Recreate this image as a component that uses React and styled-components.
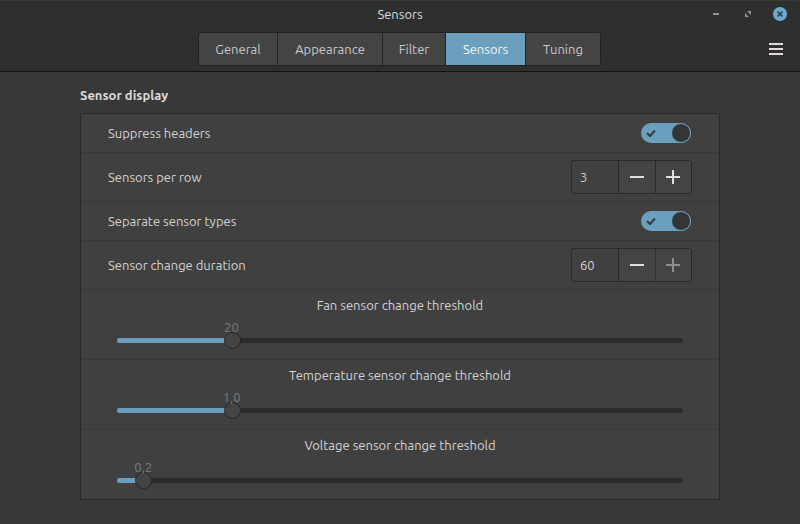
import React, { useState } from "react";
import styled, { createGlobalStyle, css } from "styled-components";

const blue = "#6a9fbe";
const line = "#292929";

const GlobalStyle = createGlobalStyle`
  *, *::before, *::after { box-sizing: border-box; }
  body {
    margin: 0;
    background: #383838;
    color: #d3d3d3;
    font: 13px/20px Ubuntu, "Noto Sans", sans-serif;
  }
  button, input { font: inherit; color: inherit; margin: 0; }
  button { cursor: pointer; }
`;

const Window = styled.div`
  display: flex;
  flex-direction: column;
  min-height: 100vh;
  border-bottom: 1px solid #3b3538;
`;

const Header = styled.header`
  background: #2f2f2f;
  border-top: 1px solid #393939;
  border-bottom: 1px solid #131313;
  border-radius: 0 3px 0 0;
  padding-bottom: 5px;
`;

const Bar = styled.div`
  display: grid;
  grid-template-columns: 1fr auto 1fr;
  align-items: center;
`;

const TitleBar = styled(Bar)`
  height: 26px;
  padding: 0 13px;
`;

const ToolBar = styled(Bar)`
  height: 34px;
  margin-top: 5px;
  padding: 0 17px 0 16px;
`;

const Title = styled.h1`
  grid-column: 2;
  margin: 0;
  font-size: 13px;
  font-weight: 400;
  line-height: 20px;
  color: #dcdcdc;
`;

const WindowButtons = styled.div`
  display: flex;
  justify-content: flex-end;
  gap: 18px;
`;

const IconButton = styled.button`
  display: flex;
  justify-self: end;
  padding: 0;
  border: 0;
  background: none;
`;

const Tabs = styled.nav`
  grid-column: 2;
  display: grid;
  grid-template-columns: 79px 105px 63px 80px 74px;
  height: 34px;
  border: 1px solid #222;
  border-radius: 3px;
  overflow: hidden;
`;

const Tab = styled.button`
  padding: 0;
  border: 0;
  border-right: 1px solid #222;
  background: ${(p) => (p.$active ? blue : "#444")};
  color: ${(p) => (p.$active ? "#f4f4f4" : "#c8c8c8")};
  &:last-child { border-right: 0; }
`;

const Content = styled.main`
  padding: 13px 80px 24px;
`;

const Heading = styled.h2`
  margin: 0 0 8px;
  font-size: 13px;
  font-weight: 700;
  line-height: 20px;
  color: #dadada;
`;

const Panel = styled.section`
  border: 1px solid ${line};
  background: #404040;
`;

const divider = css`
  border-bottom: 1px solid #393939;
  &:last-child { border-bottom: 0; }
`;

const Row = styled.div`
  display: flex;
  align-items: center;
  justify-content: space-between;
  min-height: ${(p) => (p.$tall ? 49 : 39)}px;
  padding: 0 27px;
  ${divider}
`;

const Switch = styled.label`
  position: relative;
  display: flex;
  align-items: center;
  justify-content: ${(p) => (p.$on ? "flex-end" : "flex-start")};
  width: 50px;
  height: 20px;
  margin-right: 1px;
  border-radius: 10px;
  background: ${(p) => (p.$on ? blue : "#2b2b2b")};
`;

const SwitchInput = styled.input`
  position: absolute;
  inset: 0;
  width: 100%;
  height: 100%;
  opacity: 0;
`;

const Check = styled.svg`
  position: absolute;
  left: 5px;
  top: 5px;
`;

const Knob = styled.span`
  width: 20px;
  height: 20px;
  border: 1px solid ${blue};
  border-radius: 50%;
  background: #353535;
`;

const Spin = styled.div`
  display: flex;
  height: 34px;
  border: 1px solid ${line};
  border-radius: 3px;
  background: #404040;
`;

const SpinInput = styled.input`
  width: 46px;
  padding: 0 8px;
  border: 0;
  outline: 0;
  background: none;
`;

const SpinButton = styled.button`
  display: grid;
  place-items: center;
  width: 37px;
  padding: 0;
  border: 0;
  border-left: 1px solid ${line};
  background: #444;
  color: #dedede;
  &:last-child { width: 36px; padding-right: 1px; }
  &:disabled { color: #8e8e8e; border-color: #343434; cursor: default; }
`;

const ScaleRow = styled.div`
  min-height: 70px;
  padding: 5px 36px 10px;
  ${divider}
  &:last-child { min-height: 69px; }
`;

const ScaleLabel = styled.label`
  display: block;
  text-align: center;
`;

const Scale = styled.div`
  position: relative;
  padding-top: 17px;
`;

const ScaleValue = styled.output`
  position: absolute;
  top: 2px;
  left: calc(8px + (100% - 17px) * var(--part));
  transform: translateX(-50%);
  color: #7c7c7c;
  pointer-events: none;
`;

const ScaleInput = styled.input`
  display: block;
  width: 100%;
  height: 17px;
  appearance: none;
  background: none;
  outline: 0;
  &::-webkit-slider-runnable-track {
    height: 5px;
    border-radius: 3px;
    background: linear-gradient(
      to right,
      ${blue} calc(8px + (100% - 17px) * var(--part)),
      #2b2b2b 0
    );
  }
  &::-webkit-slider-thumb {
    appearance: none;
    width: 17px;
    height: 17px;
    margin-top: -6px;
    border: 1px solid #262626;
    border-radius: 50%;
    background: #444;
  }
`;

function SwitchRow({ label }) {
  const [on, setOn] = useState(true);
  return (
    <Row>
      <span>{label}</span>
      <Switch $on={on}>
        <SwitchInput type="checkbox" role="switch" aria-label={label} checked={on} onChange={() => setOn(!on)} />
        {on && (
          <Check width="10" height="10" viewBox="0 0 10 10" fill="none" stroke="#353b42" strokeWidth="2">
            <path d="M1 5 4 8 9 2.5" />
          </Check>
        )}
        <Knob />
      </Switch>
    </Row>
  );
}

function SpinRow({ id, label, initial, max }) {
  const [value, setValue] = useState(initial);
  return (
    <Row $tall>
      <label htmlFor={id}>{label}</label>
      <Spin>
        <SpinInput id={id} inputMode="numeric" value={value} onChange={(e) => setValue(Math.min(max, Number(e.target.value) || 0))} />
        <SpinButton aria-label="Decrease" disabled={value <= 0} onClick={() => setValue(value - 1)}>
          <svg width="14" height="14" viewBox="0 0 14 14" fill="currentColor">
            <rect y="6" width="14" height="2" />
          </svg>
        </SpinButton>
        <SpinButton aria-label="Increase" disabled={value >= max} onClick={() => setValue(value + 1)}>
          <svg width="14" height="14" viewBox="0 0 14 14" fill="currentColor">
            <path d="M0 6h6V0h2v6h6v2H8v6H6V8H0z" />
          </svg>
        </SpinButton>
      </Spin>
    </Row>
  );
}

function ScaleItem({ id, label, initial, max, digits }) {
  const [value, setValue] = useState(initial);
  return (
    <ScaleRow>
      <ScaleLabel htmlFor={id}>{label}</ScaleLabel>
      <Scale style={{ "--part": value / max }}>
        <ScaleInput id={id} type="range" min="0" max={max} step={digits ? 0.1 : 1} value={value} onChange={(e) => setValue(Number(e.target.value))} />
        <ScaleValue htmlFor={id}>{value.toFixed(digits).replace(".", ",")}</ScaleValue>
      </Scale>
    </ScaleRow>
  );
}

export default function App() {
  const [tab, setTab] = useState("Sensors");
  return (
    <Window>
      <GlobalStyle />
      <Header>
        <TitleBar>
          <Title>Sensors</Title>
          <WindowButtons>
            <IconButton aria-label="Minimize">
              <svg width="14" height="14" viewBox="0 0 14 14"><path fill="#929292" d="M4 6h6v2H4z" /></svg>
            </IconButton>
            <IconButton aria-label="Maximize">
              <svg width="14" height="14" viewBox="0 0 14 14"><path fill="#929292" d="M6 4h4v4zM4 6l4 4H4z" /></svg>
            </IconButton>
            <IconButton aria-label="Close">
              <svg width="14" height="14" viewBox="0 0 14 14">
                <circle cx="7" cy="7" r="7" fill="#6cabcd" />
                <path d="M4.5 4.5l5 5M9.5 4.5l-5 5" stroke="#2f3c45" strokeWidth="1.7" />
              </svg>
            </IconButton>
          </WindowButtons>
        </TitleBar>
        <ToolBar>
          <Tabs>
            {["General", "Appearance", "Filter", "Sensors", "Tuning"].map((name) => (
              <Tab key={name} $active={name === tab} onClick={() => setTab(name)}>{name}</Tab>
            ))}
          </Tabs>
          <IconButton aria-label="Menu">
            <svg width="14" height="12" viewBox="0 0 14 12"><path fill="#dfd8dc" d="M0 0h14v2H0zM0 5h14v2H0zM0 10h14v2H0z" /></svg>
          </IconButton>
        </ToolBar>
      </Header>
      <Content>
        <Heading>Sensor display</Heading>
        <Panel>
          <SwitchRow label="Suppress headers" />
          <SpinRow id="per-row" label="Sensors per row" initial={3} max={10} />
          <SwitchRow label="Separate sensor types" />
          <SpinRow id="duration" label="Sensor change duration" initial={60} max={60} />
          <ScaleItem id="fan" label="Fan sensor change threshold" initial={20} max={103} digits={0} />
          <ScaleItem id="temperature" label="Temperature sensor change threshold" initial={1} max={5.15} digits={1} />
          <ScaleItem id="voltage" label="Voltage sensor change threshold" initial={0.2} max={6} digits={1} />
        </Panel>
      </Content>
    </Window>
  );
}
